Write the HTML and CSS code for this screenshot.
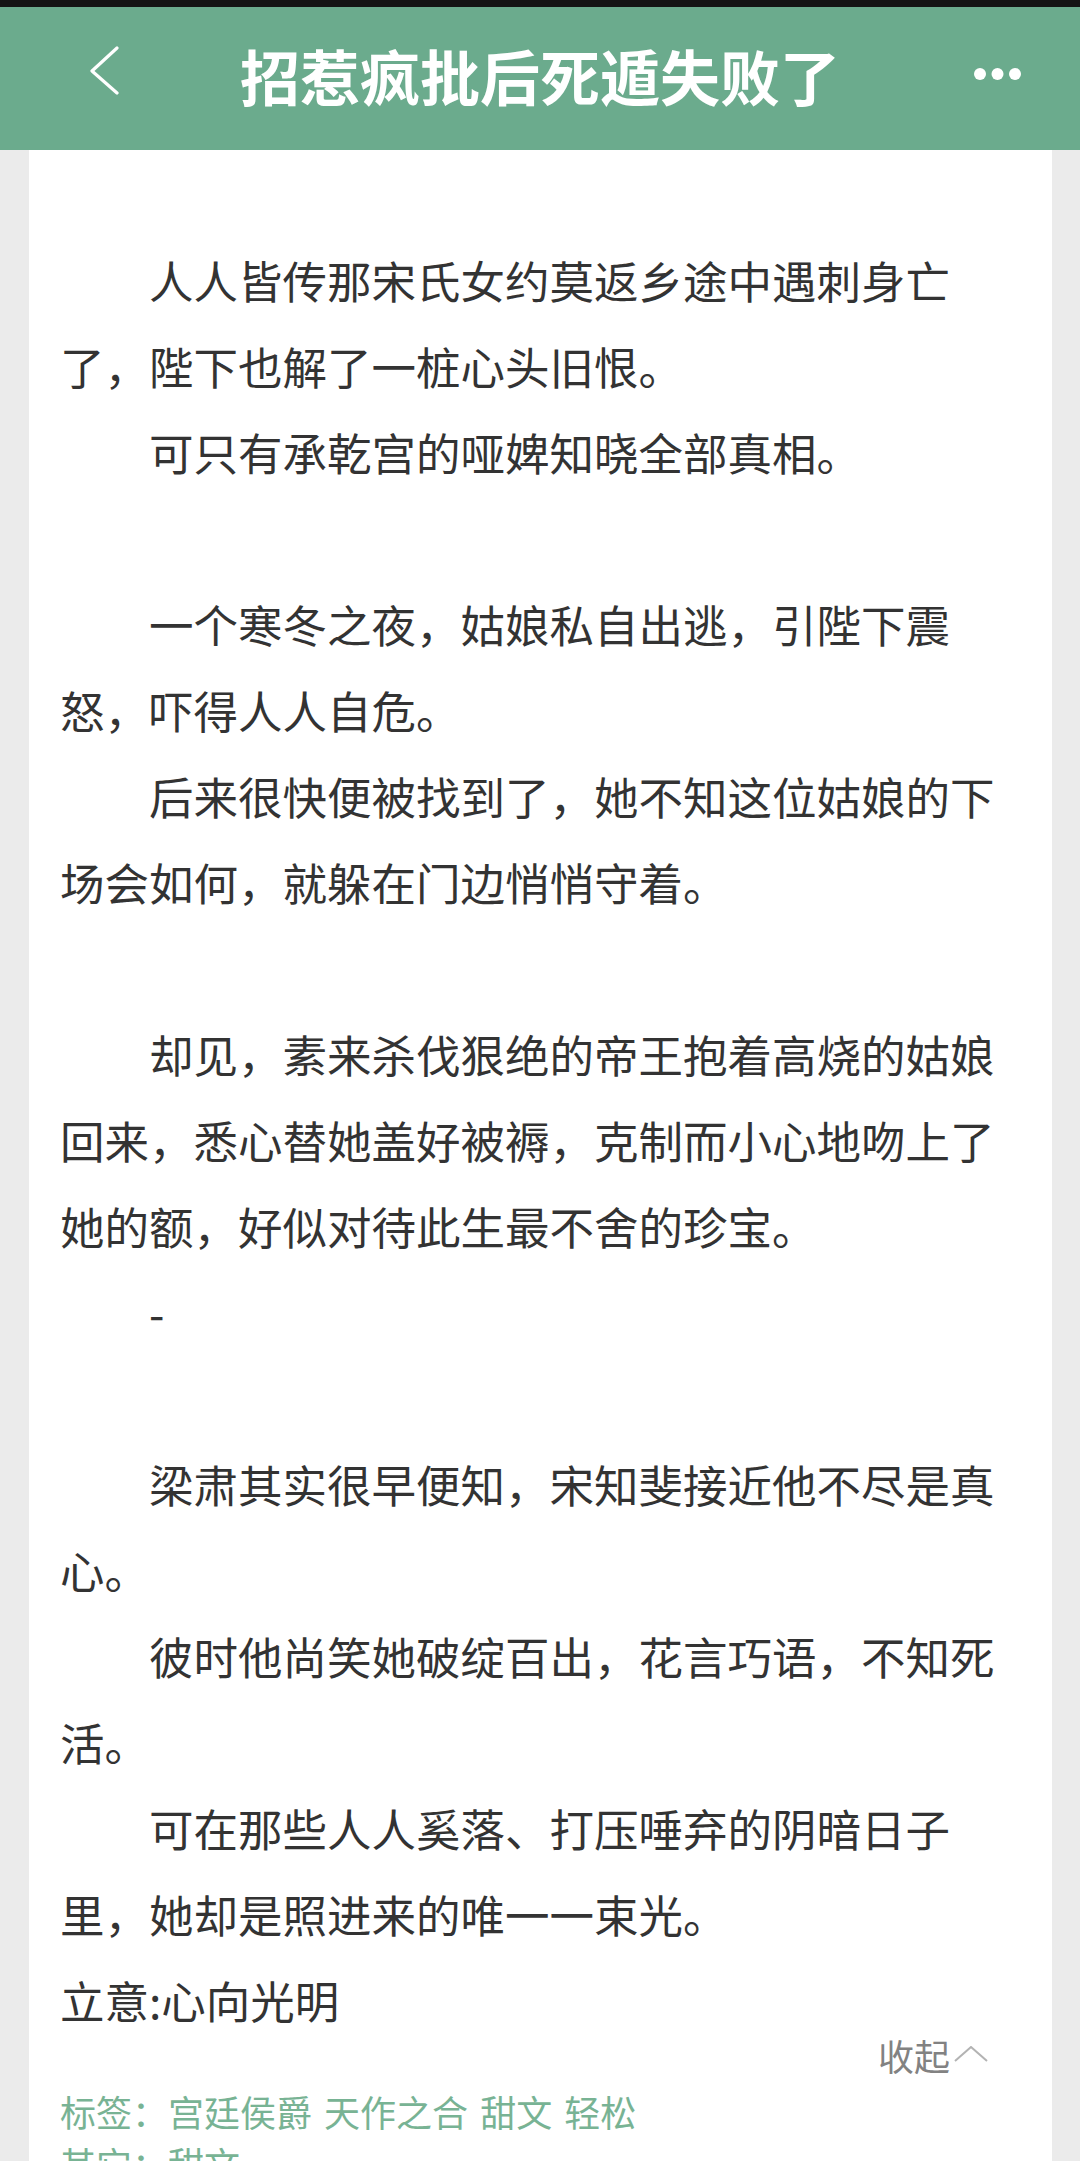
FILE: index.html
```html
<!DOCTYPE html>
<html lang="zh-CN">
<head>
<meta charset="utf-8">
<title>招惹疯批后死遁失败了</title>
<link rel="stylesheet" href="styles.css">
</head>
<body>
<div class="statusbar"></div>
<header class="topbar">
  <svg class="back" width="32" height="50" viewBox="0 0 32 50" aria-hidden="true">
    <polyline points="29,2 4,25 29,47" fill="none" stroke="#fff" stroke-width="3.2" stroke-linecap="round" stroke-linejoin="round"/>
  </svg>
  <h1 class="title">招惹疯批后死遁失败了</h1>
  <svg class="more" width="48" height="14" viewBox="0 0 48 14" aria-hidden="true">
    <circle cx="6" cy="7" r="6" fill="#fff"/>
    <circle cx="23.5" cy="7" r="6" fill="#fff"/>
    <circle cx="41" cy="7" r="6" fill="#fff"/>
  </svg>
</header>
<main class="card">
  <section class="intro">
    <p>人人皆传那宋氏女约莫返乡途中遇刺身亡了，陛下也解了一桩心头旧恨。</p>
    <p>可只有承乾宫的哑婢知晓全部真相。</p>
    <p class="gap"></p>
    <p>一个寒冬之夜，姑娘私自出逃，引陛下震怒，吓得人人自危。</p>
    <p>后来很快便被找到了，她不知这位姑娘的下场会如何，就躲在门边悄悄守着。</p>
    <p class="gap"></p>
    <p>却见，素来杀伐狠绝的帝王抱着高烧的姑娘回来，悉心替她盖好被褥，克制而小心地吻上了她的额，好似对待此生最不舍的珍宝。</p>
    <p>-</p>
    <p class="gap"></p>
    <p>梁肃其实很早便知，宋知斐接近他不尽是真心。</p>
    <p>彼时他尚笑她破绽百出，花言巧语，不知死活。</p>
    <p>可在那些人人奚落、打压唾弃的阴暗日子里，她却是照进来的唯一一束光。</p>
    <p class="plain">立意:心向光明</p>
  </section>
  <div class="fold">
    <span>收起</span>
    <svg class="fold-icon" width="34" height="16" viewBox="0 0 34 16" aria-hidden="true">
      <polyline points="1,15 17,1 33,15" fill="none" stroke="#b3b3b3" stroke-width="2"/>
    </svg>
  </div>
  <ul class="meta">
    <li>标签：宫廷侯爵 天作之合 甜文 轻松</li>
    <li>其它：甜文</li>
  </ul>
</main>
</body>
</html>
```

FILE: styles.css
```css
html, body {
  margin: 0;
  padding: 0;
}

body {
  width: 1080px;
  height: 2161px;
  overflow: hidden;
  background: #ebebeb;
  font-family: "Noto Sans CJK SC", "Noto Sans", sans-serif;
  color: #333;
}

.statusbar {
  height: 7px;
  background: #141414;
}

.topbar {
  height: 143px;
  background: #6bab8d;
  display: grid;
  grid-template-columns: 1fr auto 1fr;
  align-items: center;
  padding: 0 58px;
}

.back {
  justify-self: start;
  margin: 0 0 15px 30px;
}

.title {
  margin: 0 0 8px;
  font-size: 60px;
  font-weight: 700;
  line-height: 1;
  color: #fff;
}

.more {
  justify-self: end;
  margin-bottom: 9px;
}

.card {
  margin: 0 28px 0 29px;
  min-height: 2011px;
  background: #fff;
  padding: 87px 40px 0 31px;
  box-sizing: border-box;
}

.intro p {
  margin: 0;
  font-size: 44.5px;
  line-height: 86px;
  text-indent: 2em;
  color: #333;
}

.intro p.gap {
  height: 86px;
}

.intro p.plain {
  text-indent: 0;
}

.fold {
  height: 24px;
  display: flex;
  justify-content: flex-end;
  align-items: center;
  gap: 4px;
  padding-right: 24px;
  font-size: 36px;
  line-height: 24px;
  color: #828282;
}

.fold-icon {
  margin-top: -2px;
}

.meta {
  list-style: none;
  margin: 18px 0 0;
  padding: 0;
  font-size: 36px;
  line-height: 52px;
  word-spacing: 4px;
  color: #78b394;
}
```
